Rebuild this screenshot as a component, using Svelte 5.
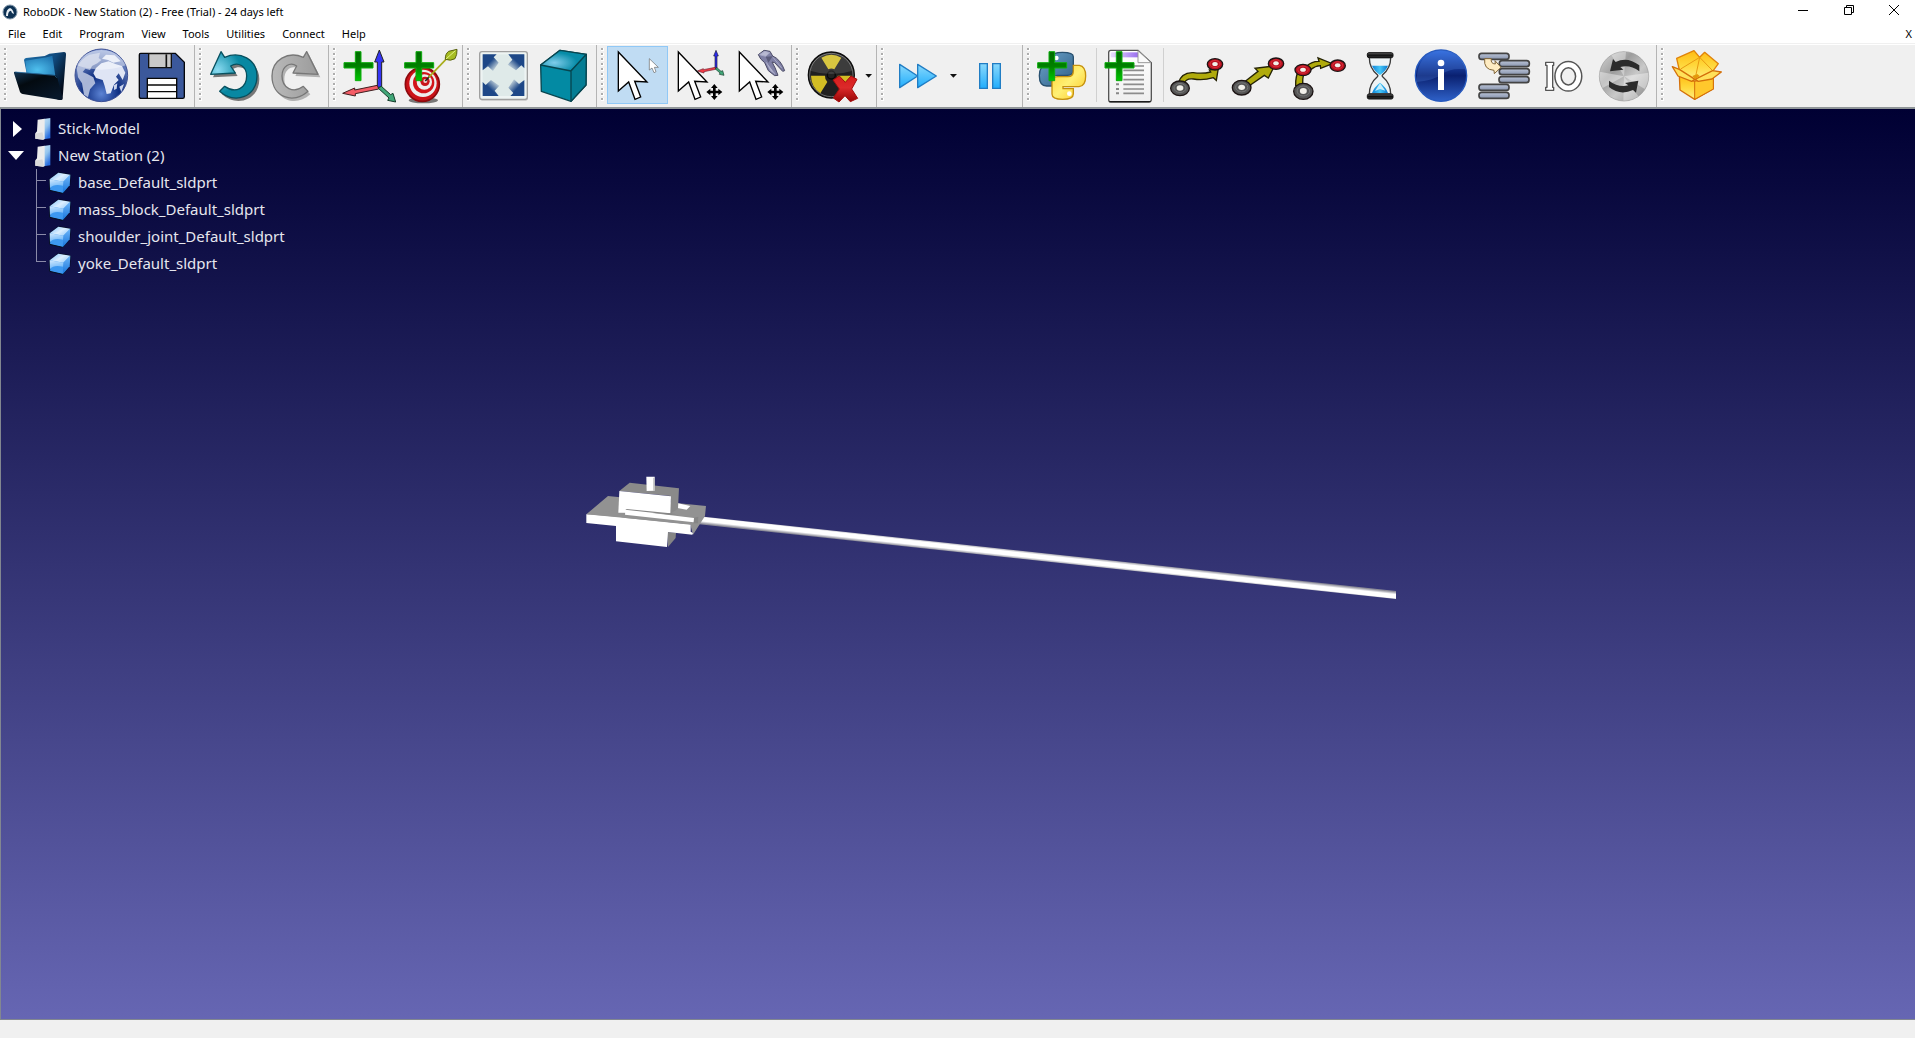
<script>
  const menus = ['File', 'Edit', 'Program', 'View', 'Tools', 'Utilities', 'Connect', 'Help'];

  // x and y are the origin of each icon's own drawing space
  const groups = [
    [
      { icon: 'open', label: 'Open', x: 30, y: 138 },
      { icon: 'globe', label: 'Open online library', x: 213, y: 138 },
      { icon: 'save', label: 'Save Station', x: 396, y: 138 }
    ],
    [
      { icon: 'undo', label: 'Undo', x: 45 },
      { icon: 'redo', label: 'Redo', x: 228 }
    ],
    [
      { icon: 'frame', label: 'Add reference frame', x: 447 },
      { icon: 'target', label: 'Add target', x: 630 }
    ],
    [
      { icon: 'fit', label: 'Fit all', x: 39 },
      { icon: 'cube', label: 'Isometric view', x: 222 }
    ],
    [
      { icon: 'select', label: 'Select', x: 441, pressed: true },
      { icon: 'moveFrame', label: 'Move reference frame', x: 624 },
      { icon: 'moveTool', label: 'Move tool', x: 807 }
    ],
    [{ icon: 'collision', label: 'Check collisions', x: 36, menu: true }],
    [
      { icon: 'fast', label: 'Fast simulation', x: 291, menu: true },
      { icon: 'pause', label: 'Pause simulation', x: 510 }
    ],
    [
      { icon: 'python', label: 'Add Python program', x: 729 },
      { icon: 'program', label: 'Add program', x: 930, split: true },
      { icon: 'moveJ', label: 'Move joint', x: 51, split: true },
      { icon: 'moveL', label: 'Move linear', x: 234 },
      { icon: 'moveC', label: 'Move circular', x: 417 },
      { icon: 'wait', label: 'Pause instruction', x: 600 },
      { icon: 'info', label: 'Show message', x: 783 },
      { icon: 'call', label: 'Program call', x: 96 },
      { icon: 'io', label: 'Set or wait I/O', x: 279 },
      { icon: 'sync', label: 'Update program', x: 462 }
    ],
    [{ icon: 'box', label: 'Export package', x: 681 }]
  ];

  const parts = [
    'base_Default_sldprt',
    'mass_block_Default_sldprt',
    'shoulder_joint_Default_sldprt',
    'yoke_Default_sldprt'
  ];
</script>

{#snippet plus(x, y)}
  <path transform="translate({x} {y})" d="M34 0h17v33h36v16H51v38H34V49H0V33h34z" fill="url(#green)" stroke="#0cae0c" stroke-width="3" />
{/snippet}

{#snippet pointer(x)}
  <path transform="translate({x} 36)" d="M0 0V117L31 90L50 142L67 135L49 88L86 90Z" fill="#fff" stroke="#000" stroke-width="4" />
{/snippet}

{#snippet fourWay(x, y)}
  <path transform="translate({x} {y})" d="M0-24l10 12H4V-4H12V-10L24 0L12 10V4H4V12H10L0 24L-10 12H-4V4H-12V10L-24 0L-12-10V-4H-4V-12H-10Z" fill="#000" />
{/snippet}

{#snippet node(x, y, rx, ry, red)}
  <ellipse cx={x} cy={y} {rx} {ry} fill={red ? '#b9101f' : '#555'} stroke="#1c1414" stroke-width="4" />
  <ellipse cx={x} cy={y - 1} rx={rx * 0.65} ry={ry * 0.62} fill="none" stroke={red ? '#d8323c' : '#777'} stroke-width="3" />
  <ellipse cx={x} cy={y - 1} rx={rx * 0.36} ry={ry * 0.36} fill="#f2f0ea" />
{/snippet}

{#snippet pill(x, y)}
  <rect {x} {y} width="90" height="18" rx="8" fill="url(#pill)" stroke="#444" stroke-width="5" />
{/snippet}

{#snippet art(name)}
  {#if name === 'open'}
    <path d="M72 180Q73 175 78 174L134 168L148 161L192 156Q199 156 198 165L188 294Q187 301 178 300L90 270Z" fill="url(#folderBack)" />
    <path d="M76 182L140 172L157 167L166 228L80 222Z" fill="url(#folderGlow)" />
    <path d="M44 215L164 225Q170 226 172 233L188 297Q187 301 181 300L68 282Q62 281 60 276L42 220Q41 215 44 215Z" fill="url(#folderFront)" />
    <path d="M46 216L164 226L170 233" fill="none" stroke="#2c78b4" stroke-width="2" />
  {:else if name === 'globe'}
    <circle cx="304" cy="226" r="79" fill="url(#sea)" stroke="#3c4f94" stroke-width="3" />
    <path d="M230 204Q240 178 268 164L300 158L296 174L304 180L292 190L276 198L270 210L256 206L248 216L262 222L280 232L286 250L270 268L264 292L252 284L246 250L234 232Z" fill="#b9c4e0" opacity=".9" />
    <path d="M304 190L326 184L346 192L366 198L376 218L368 240L356 220L348 230L356 240L342 254L332 280L320 282L314 258L308 240L288 234L280 220L288 204Z" fill="#dfe5f5" />
    <path d="M306 176L318 164L344 166L362 184L340 188L324 180Z" fill="#dfe5f5" />
    <path d="M342 256L352 250L350 266L342 270ZM358 260L372 252L364 276Z" fill="#ccd5ec" />
    <path d="M231 196Q250 153 304 150Q358 153 377 196Q304 222 231 196Z" fill="#fff" opacity=".42" />
  {:else if name === 'save'}
    <path d="M422 160H526L553 187V290Q553 295 548 295H424Q418 295 418 290V164Q418 160 422 160Z" fill="#3b589b" stroke="#05070c" stroke-width="4" />
    <path d="M446 161H514V203H446Z" fill="#c9c9c9" stroke="#111" stroke-width="4" />
    <path d="M499 163V201" stroke="#111" stroke-width="5" />
    <path d="M442 235H530V295H442Z" fill="#fff" stroke="#080808" stroke-width="4" />
    <path d="M442 255H530M442 275H530" stroke="#080808" stroke-width="4" />
  {:else if name === 'undo'}
    <path transform="translate(7 9)" d="M62 103L93 35L104 52C150 32 201 58 201 108C201 172 132 194 89 154L104 139C137 162 170 144 170 108C170 78 144 64 122 78L136 99Z" fill="#777" />
    <path d="M62 103L93 35L104 52C150 32 201 58 201 108C201 172 132 194 89 154L104 139C137 162 170 144 170 108C170 78 144 64 122 78L136 99Z" fill="url(#teal)" stroke="#07505f" stroke-width="4" stroke-linejoin="round" />
  {:else if name === 'redo'}
    <path transform="translate(7 9)" d="M384 103L350 35L340 52C294 32 246 60 246 108C246 172 311 194 354 154L340 139C310 162 276 144 276 108C276 78 301 64 320 78L309 99Z" fill="#b2b2b2" />
    <path d="M384 103L350 35L340 52C294 32 246 60 246 108C246 172 311 194 354 154L340 139C310 162 276 144 276 108C276 78 301 64 320 78L309 99Z" fill="url(#grey)" stroke="#777" stroke-width="4" stroke-linejoin="round" />
  {:else if name === 'frame'}
    <path d="M562 142V66H554L568 30L582 66H575V142Z" fill="#3535f4" stroke="#222" stroke-width="3" />
    <path d="M562 136L494 150V144L458 160L496 168V161L566 147Z" fill="#f45c66" stroke="#402020" stroke-width="3" />
    <path d="M564 144L574 139L602 164L609 160L617 186L593 181L597 174Z" fill="#41a778" stroke="#143c2a" stroke-width="3" />
    {@render plus(462, 35)}
  {:else if name === 'target'}
    <ellipse cx="700" cy="181" rx="44" ry="9" fill="#777" />
    <circle cx="697" cy="133" r="51" fill="#cb1218" stroke="#8d0a0e" stroke-width="5" />
    <circle cx="699" cy="130" r="41" fill="#eee" />
    <circle cx="701" cy="128" r="32" fill="#d3151a" />
    <circle cx="703" cy="126" r="23" fill="#eee" />
    <circle cx="705" cy="124" r="14" fill="#c9141a" />
    <circle cx="706" cy="123" r="6" fill="#f0d0d0" />
    {@render plus(644, 35)}
    <path d="M706 123L722 105" stroke="#222" stroke-width="5" />
    <path d="M716 112L770 56" stroke="#a8ad1d" stroke-width="5" />
    <path d="M766 58Q765 42 776 34L801 28Q802 44 795 56Q782 64 766 58Z" fill="#a6bd21" stroke="#59600e" stroke-width="3" />
    <path d="M768 57L796 32" stroke="#e5f08c" stroke-width="3" />
  {:else if name === 'fit'}
    <rect x="60" y="36" width="144" height="146" rx="8" fill="#999" opacity=".5" />
    <rect x="59" y="35" width="143" height="143" rx="7" fill="#eef4f3" stroke="#a0a0a0" stroke-width="4" />
    <rect x="68" y="43" width="125" height="125" fill="#dfeae9" />
    {#each [0, 90, 180, 270] as turn}
      <g transform="rotate({turn} 130.500 105.500)">
        <path d="M68 43H110L101 52L116 68L99 93L84 79L68 91Z" fill="url(#corner)" />
      </g>
    {/each}
  {:else if name === 'cube'}
    <path d="M242 75L300 31L379 43L378 135L333 184L244 154Z" fill="#038aa3" stroke="#07454f" stroke-width="4" stroke-linejoin="round" />
    <path d="M242 75L300 31L379 43L333 93Z" fill="url(#cubeTop)" stroke="#07454f" stroke-width="4" stroke-linejoin="round" />
    <path d="M333 93L379 43L378 135L333 184Z" fill="#047d94" stroke="#07454f" stroke-width="4" stroke-linejoin="round" />
  {:else if name === 'select'}
    {@render pointer(475)}
    <path d="M568 56V90L576 84L582 98L588 95L583 82H595Z" fill="#fff" stroke="#666" stroke-width="2" />
  {:else if name === 'moveFrame'}
    <path d="M765 84V48H761L768 31L775 48H771V84Z" fill="#2929f0" stroke="#223" stroke-width="2" />
    <path d="M766 82L730 89V86L712 93L732 99V95L767 88Z" fill="#f03b45" stroke="#723" stroke-width="2" />
    <path d="M765 86L771 83L783 94L788 92L792 106L778 103L780 99Z" fill="#41a778" stroke="#143c2a" stroke-width="2" />
    {@render pointer(655)}
    {@render fourWay(763, 156)}
  {:else if name === 'moveTool'}
    <path d="M895 44L912 31L930 34L938 48Q962 58 974 92L968 94L944 68L936 66Q946 82 954 106L944 107L925 92L914 68Q900 58 895 44Z" fill="#7f80a5" stroke="#4b4b66" stroke-width="3" />
    <path d="M899 44L914 34L929 38L917 49ZM919 67L932 92L945 101M939 52L965 84" fill="#b8b9d2" stroke="#a9abc8" stroke-width="3" />
    <path d="M917 50L938 49L925 68Z" fill="#5b5c7c" />
    {@render pointer(838)}
    {@render fourWay(946, 156)}
  {:else if name === 'collision'}
    <circle cx="124" cy="105" r="69" fill="#202020" stroke="#0c0c0c" stroke-width="4" />
    <circle cx="124" cy="105" r="65" fill="none" stroke="#696969" stroke-width="3" />
    <path d="M115 88L94 53Q124 36 154 53L133 88Q124 83 115 88ZM105 107H63Q63 140 91 160L112 126Q104 118 105 107ZM143 107H185Q185 140 157 160L136 126Q144 118 143 107Z" fill="#d2bd24" />
    <circle cx="124" cy="105" r="12" fill="#222" stroke="#090909" stroke-width="4" />
    <path d="M60 92Q70 42 124 39Q178 42 188 92Q124 112 60 92Z" fill="#fff" opacity=".13" />
    <path d="M129 120L148 108L166 127L183 108L201 118L185 147L203 175L181 185L165 167L147 186L130 174L148 147Z" fill="url(#cross)" stroke="#a30e0e" stroke-width="3" stroke-linejoin="round" />
    <path d="M226 102H246L236 113Z" fill="#111" />
  {:else if name === 'fast'}
    <path d="M329 73L383 108L329 143ZM383 73L439 108L383 143Z" fill="url(#play)" stroke="#207dc4" stroke-width="4" stroke-linejoin="round" />
    <path d="M480 102H501L490 113Z" fill="#111" />
  {:else if name === 'pause'}
    <path d="M569 71H592V145H569ZM608 71H631V145H608Z" fill="url(#play)" stroke="#207dc4" stroke-width="4" />
  {:else if name === 'python'}
    <path d="M787 62V50Q787 37 817 37Q850 37 850 50V89Q850 106 832 106H802Q786 106 786 122V138H770Q748 138 748 107Q748 77 770 77H818V72H787Z" fill="url(#pyBlue)" stroke="#28506f" stroke-width="4" />
    <path d="M850 76H868Q887 79 887 108Q887 138 867 140H819V146H850V162Q850 178 818 178Q786 178 786 162V127Q786 110 803 110H834Q850 110 850 93Z" fill="url(#pyYellow)" stroke="#c6910e" stroke-width="4" />
    <circle cx="799" cy="54" r="7" fill="#fff" />
    <circle cx="838" cy="161" r="7" fill="#fff" />
    {@render plus(743, 35)}
  {:else if name === 'program'}
    <path d="M962 31H1044L1084 68V178Q1084 186 1077 186H963Q956 186 956 179V38Q956 31 962 31Z" fill="url(#paper)" stroke="#555" stroke-width="4" />
    <path d="M958 185H1082" stroke="#1c1c1c" stroke-width="4" />
    <path d="M962 37H1044V52H962Z" fill="url(#violet)" />
    <path d="M1044 32V68H1083Z" fill="#fafafa" stroke="#999" stroke-width="3" />
    <path d="M1000 78H1062M1000 91H1062M1000 105H1062M1000 119H1062M1000 133H1062M1000 147H1062M1000 160H1062" stroke="#8c8c8c" stroke-width="5" />
    <path d="M978 119H987M978 133H987M978 147H987M978 160H987" stroke="#888" stroke-width="6" />
    {@render plus(945, 35)}
  {:else if name === 'moveJ'}
    <path d="M84 131Q94 96 130 98Q158 102 182 96L178 90L205 84L199 121L190 113Q160 122 130 117Q107 114 101 133Z" fill="#b0ab0c" stroke="#252305" stroke-width="4" />
    {@render node(90, 145, 28, 22, false)}
    {@render node(195, 73, 23, 17, true)}
  {:else if name === 'moveL'}
    <path d="M283 126L324 94L315 85L373 78L355 114L343 106L300 136Z" fill="#b0ab0c" stroke="#252305" stroke-width="4" />
    {@render node(275, 143, 28, 22, false)}
    {@render node(378, 71, 23, 17, true)}
  {:else if name === 'moveC'}
    <path d="M437 136Q436 110 446 92L463 98Q456 114 459 140ZM470 78Q487 63 507 64L504 54L547 71L512 85L511 77Q495 78 484 88Z" fill="#b0ab0c" stroke="#252305" stroke-width="4" />
    {@render node(460, 154, 29, 24, false)}
    {@render node(459, 90, 24, 17, true)}
    {@render node(563, 77, 23, 17, true)}
  {:else if name === 'wait'}
    <path d="M658 53H722Q722 84 698 104Q695 107 698 110Q722 130 722 162H658Q658 130 682 110Q685 107 682 104Q658 84 658 53Z" fill="#edf3f5" stroke="#3a3a3a" stroke-width="4" />
    <path d="M666 77H714Q708 92 690 105Q672 92 666 77ZM690 128Q708 142 714 159H666Q672 142 690 128Z" fill="url(#water)" />
    <path d="M690 130L706 152L690 147L675 153Z" fill="#c8eefb" />
    <rect x="652" y="38" width="77" height="15" rx="5" fill="url(#cap)" stroke="#111" stroke-width="3" />
    <rect x="652" y="162" width="77" height="15" rx="5" fill="url(#cap)" stroke="#111" stroke-width="3" />
  {:else if name === 'info'}
    <circle cx="873" cy="107" r="77" fill="url(#infoBlue)" stroke="#2659be" stroke-width="4" />
    <path d="M799 126Q850 121 873 105Q900 83 946 88Q937 34 873 31Q802 35 799 126Z" fill="#568ce9" opacity=".25" />
    <circle cx="873" cy="69" r="10" fill="#fff" />
    <path d="M864 87H882V150H864Z" fill="#fff" />
  {:else if name === 'call'}
    {@render pill(117, 40)}
    {@render pill(178, 62)}
    {@render pill(178, 86)}
    {@render pill(177, 110)}
    {@render pill(117, 133)}
    {@render pill(117, 157)}
    <path d="M134 56H154Q151 71 166 72L165 62L183 82L163 101L162 91Q130 89 134 56Z" fill="#ffecc2" stroke="#806438" stroke-width="3" />
  {:else if name === 'io'}
    <path d="M317 67H341V76H338V142H341V151H317V142H321V76H317Z" fill="#fff" stroke="#555" stroke-width="4" stroke-linejoin="round" />
    <ellipse cx="385" cy="109" rx="31" ry="35" fill="none" stroke="#555" stroke-width="23" />
    <ellipse cx="385" cy="109" rx="31" ry="35" fill="none" stroke="#fff" stroke-width="14" />
  {:else if name === 'sync'}
    <circle cx="552" cy="109" r="74" fill="url(#steel)" stroke="#999" stroke-width="2" />
    <path d="M552 109L514 45Q535 34 558 35ZM552 109L595 169Q572 183 550 182Z" fill="#fff" opacity=".35" />
    <path d="M552 109L479 95Q476 122 488 144ZM552 109L625 98Q628 123 614 147Z" fill="#fff" opacity=".4" />
    <path d="M510 94L519 57L527 66Q562 48 598 76V94Q570 73 541 81L550 89ZM595 122L588 158L579 150Q540 168 507 141V122Q536 144 565 136L555 129Z" fill="#2b2b2b" />
  {:else if name === 'box'}
    <path d="M718 106L764 124L820 111V147L764 178L720 150Z" fill="url(#boxFace)" stroke="#d4700a" stroke-width="4" stroke-linejoin="round" />
    <path d="M764 124L820 111V147L764 178Z" fill="#ffc82c" stroke="#d4700a" stroke-width="3" />
    <path d="M710 55L762 32L779 52L794 37L835 71L818 94L765 120L718 90Z" fill="url(#boxFace)" stroke="#e08309" stroke-width="4" stroke-linejoin="round" />
    <path d="M779 52L816 90M722 87L779 52L765 118" fill="none" stroke="#e89a11" stroke-width="3" />
    <path d="M697 80L718 88L765 118L755 124L714 108ZM765 118L818 92L844 96L816 117L775 124Z" fill="#ffe05a" stroke="#d4700a" stroke-width="4" stroke-linejoin="round" />
    <path d="M757 108L772 102L779 108L765 118Z" fill="#e49a0b" />
  {/if}
{/snippet}

{#snippet stationIcon()}
  <svg class="station" viewBox="0 0 48 66" aria-hidden="true">
    <path d="M26 3L46 0V61L26 64Z" fill="url(#stationSide)" />
    <path d="M8 5L29 2V63L25 65L1 62V46L6 40Z" fill="#ececec" />
    <path d="M1 47L22 43L26 58L25 65L1 62Z" fill="#dadada" />
  </svg>
{/snippet}

<svg class="defs" aria-hidden="true">
  <defs>
    <linearGradient id="green" x2="0" y2="1"><stop stop-color="#006a00" /><stop offset=".5" stop-color="#008000" /><stop offset="1" stop-color="#00c800" /></linearGradient>
    <linearGradient id="folderBack" x2="1" y2=".6"><stop stop-color="#1c6ea8" /><stop offset=".6" stop-color="#10497c" /><stop offset="1" stop-color="#020b1a" /></linearGradient>
    <radialGradient id="folderGlow" cx=".4" cy=".7" r=".8"><stop stop-color="#4fc0ee" /><stop offset="1" stop-color="#1d70ad" /></radialGradient>
    <linearGradient id="folderFront" x2=".7" y2="1"><stop stop-color="#123554" /><stop offset=".4" stop-color="#030a10" /><stop offset="1" stop-color="#07172a" /></linearGradient>
    <radialGradient id="sea" cx=".5" cy=".85" r=".85"><stop stop-color="#5c83d4" /><stop offset=".4" stop-color="#0d2d80" /><stop offset="1" stop-color="#8ea4d8" /></radialGradient>
    <radialGradient id="teal" cx=".15" cy=".4" r=".5"><stop stop-color="#8bdcf2" /><stop offset="1" stop-color="#0888a2" /></radialGradient>
    <linearGradient id="grey" x2="1"><stop stop-color="#b9b9b9" /><stop offset="1" stop-color="#9b9b9b" /></linearGradient>
    <linearGradient id="corner" x2=".9" y2=".9"><stop offset=".5" stop-color="#1d4787" /><stop offset="1" stop-color="#1d4787" stop-opacity="0" /></linearGradient>
    <radialGradient id="cubeTop" cx=".3" cy=".6" r=".5"><stop stop-color="#80cdeb" /><stop offset="1" stop-color="#078ca8" /></radialGradient>
    <linearGradient id="cross" x2="0" y2="1"><stop stop-color="#d61c1c" /><stop offset=".45" stop-color="#dc2a2a" /><stop offset="1" stop-color="#960606" /></linearGradient>
    <linearGradient id="play" x2="0" y2="1"><stop stop-color="#8ad9fc" /><stop offset="1" stop-color="#20adfc" /></linearGradient>
    <linearGradient id="pyBlue" x2="1" y2="1"><stop stop-color="#6ea5cd" /><stop offset="1" stop-color="#2d5d84" /></linearGradient>
    <linearGradient id="pyYellow" x2="1" y2="1"><stop stop-color="#ffd331" /><stop offset=".5" stop-color="#fff075" /><stop offset="1" stop-color="#fbc51f" /></linearGradient>
    <linearGradient id="paper" x2="0" y2="1"><stop stop-color="#fff" /><stop offset="1" stop-color="#efefef" /></linearGradient>
    <linearGradient id="violet"><stop stop-color="#e9defc" /><stop offset="1" stop-color="#9b6ff0" /></linearGradient>
    <linearGradient id="water"><stop stop-color="#0d83d8" /><stop offset=".5" stop-color="#45c7f7" /><stop offset="1" stop-color="#0877cf" /></linearGradient>
    <linearGradient id="cap" x2="0" y2="1"><stop stop-color="#666" /><stop offset=".5" stop-color="#111" /><stop offset="1" stop-color="#333" /></linearGradient>
    <linearGradient id="infoBlue" x2="0" y2="1"><stop stop-color="#2f6be0" /><stop offset=".5" stop-color="#0a2070" /><stop offset="1" stop-color="#2f62c9" /></linearGradient>
    <linearGradient id="pill" x2="0" y2="1"><stop stop-color="#bcc5d8" /><stop offset="1" stop-color="#8793ac" /></linearGradient>
    <linearGradient id="steel" x2="1" y2="1"><stop stop-color="#d8d8d8" /><stop offset=".35" stop-color="#9d9d9d" /><stop offset=".6" stop-color="#c9c9c9" /><stop offset="1" stop-color="#858585" /></linearGradient>
    <linearGradient id="boxFace" x2="0" y2="1"><stop stop-color="#ffbc14" /><stop offset=".5" stop-color="#ffd83c" /><stop offset="1" stop-color="#ffee80" /></linearGradient>
    <linearGradient id="partTop" x2="1" y2=".6"><stop stop-color="#7fbef8" /><stop offset=".6" stop-color="#dcefff" /><stop offset="1" stop-color="#a4d2fb" /></linearGradient>
    <linearGradient id="partFront" x2=".3" y2="1"><stop stop-color="#d2e9fe" /><stop offset="1" stop-color="#6db6f8" /></linearGradient>
    <linearGradient id="partSide" x2="0" y2="1"><stop stop-color="#6fb6f8" /><stop offset="1" stop-color="#1674dc" /></linearGradient>
    <linearGradient id="stationSide" x2=".4" y2="1"><stop stop-color="#c4e2f8" /><stop offset=".5" stop-color="#93c4ee" /><stop offset="1" stop-color="#2a6fe0" /></linearGradient>
    <linearGradient id="rod" gradientUnits="userSpaceOnUse" x1="1047" y1="553" x2="1046" y2="562"><stop stop-color="#8c8c98" /><stop offset=".3" stop-color="#fff" /><stop offset=".7" stop-color="#fff" /><stop offset="1" stop-color="#8c8c98" /></linearGradient>
  </defs>
</svg>

<div class="app">
  <header class="title">
    <svg class="logo" viewBox="0 0 16 16" aria-hidden="true">
      <circle cx="8" cy="8" r="7" fill="#0d3153" stroke="#8297aa" stroke-width="1" />
      <path d="M4 12Q4 5 8 4Q11 5 12 10L10 9Q9 6 8 7Q6 8 6 12Z" fill="#e7eef4" />
    </svg>
    <h1>RoboDK - New Station (2) - Free (Trial) - 24 days left</h1>
    <div class="window-buttons">
      <button aria-label="Minimize"><svg viewBox="0 0 10 10"><path d="M0 5.500H10" /></svg></button>
      <button aria-label="Restore"><svg viewBox="0 0 10 10"><path d="M.5 2.500H7.500V9.500H.5ZM2.500 2.500V.5H9.500V7.500H7.500" /></svg></button>
      <button aria-label="Close"><svg viewBox="0 0 10 10"><path d="M0 0L10 10M10 0L0 10" /></svg></button>
    </div>
  </header>

  <nav class="menubar" aria-label="Main menu">
    {#each menus as menu}<button>{menu}</button>{/each}
    <button class="close-doc" aria-label="Close station">X</button>
  </nav>

  <div class="toolbar" role="toolbar" aria-label="Tools">
    {#each groups as group, g}
      <div class="group" class:last={g === groups.length - 1}>
        <svg class="grip" viewBox="0 0 4 54" aria-hidden="true">
          <path d="M1.500 0V54" stroke="#fff" stroke-width="3" stroke-dasharray="3 2" />
          <path d="M1 0V54" stroke="#adadad" stroke-width="2" stroke-dasharray="2 3" />
        </svg>
        {#each group as tool}
          {#if tool.split}<span class="split"></span>{/if}
          <button class="tool" class:wide={tool.menu} class:pressed={tool.pressed} aria-label={tool.label} title={tool.label}>
            <svg viewBox="{tool.x} {tool.y ?? 18} {tool.menu ? 216 : 180} 174">{@render art(tool.icon)}</svg>
          </button>
        {/each}
      </div>
    {/each}
  </div>

  <main>
    <svg class="scene" viewBox="1 109 1914 910" preserveAspectRatio="xMidYMid slice" role="img" aria-label="3D view">
      <path d="M697 516L1396 591V599L697 524Z" fill="url(#rod)" />
      <g transform="translate(570 460) scale(.3333)">
        <path d="M49 163L114 108L408 138L405 168L369 224L360 190L140 180Z" fill="#929292" />
        <path d="M291 216L318 218L317 234L294 261Z" fill="#858585" />
        <path d="M324 134L324 130L361 138L350 149L322 144Z" fill="#fff" />
        <path d="M49 163L362 193V215L369 219L367 224L294 216L291 261L138 244V198L49 189Z" fill="#fff" />
        <path d="M50 163L165 148L373 173L371 191L362 194L168 174L150 171Z" fill="#929292" />
        <path d="M148 93L179 68L327 85L324 146L301 161L302 108Z" fill="#8a8a8a" />
        <path d="M148 93L303 109L301 160L145 158Z" fill="#fff" />
        <path d="M166 149L372 174L371 187L165 164Z" fill="#fff" />
        <path d="M166 149L302 164L320 163L301 160L170 147Z" fill="#858585" />
        <path d="M229 50H254V92L230 93Z" fill="#fff" />
        <path d="M250 53H254V92H250Z" fill="#b4b4b4" />
        <path d="M373 173L385 170L384 190L371 190Z" fill="#858585" />
      </g>
    </svg>

    <ul class="tree">
      <li>
        <div class="row">
          <svg class="arrow" viewBox="0 0 16 16"><path d="M5 0L14 8L5 16Z" /></svg>
          {@render stationIcon()}
          <span>Stick-Model</span>
        </div>
      </li>
      <li>
        <div class="row">
          <svg class="arrow" viewBox="0 0 16 16"><path d="M0 3H16L8 12Z" /></svg>
          {@render stationIcon()}
          <span>New Station (2)</span>
        </div>
        <ul class="children">
          {#each parts as part}
            <li class="row">
              <svg class="branch" viewBox="0 0 10 27" aria-hidden="true">
                <path d="M.5 0V{part === parts.at(-1) ? 11.500 : 27}M0 11.500H10" />
              </svg>
              <svg class="part" viewBox="0 0 66 66" aria-hidden="true">
                <path d="M2 22L28 2L64 8L62 40L41 64L2 55Z" fill="#3d98f0" stroke="#050d1c" stroke-width="3" stroke-linejoin="round" />
                <path d="M2 22L28 2L64 8L43 29Z" fill="url(#partTop)" />
                <path d="M43 29L64 8L62 40L41 64Z" fill="url(#partSide)" />
                <path d="M2 22L43 29L42 41Q14 34 3 48Z" fill="url(#partFront)" />
              </svg>
              <span>{part}</span>
            </li>
          {/each}
        </ul>
      </li>
    </ul>
  </main>

  <footer></footer>
</div>

<style>
  :global(body) {
    margin: 0;
  }
  .defs {
    position: absolute;
    width: 0;
    height: 0;
  }
  .app {
    display: flex;
    flex-direction: column;
    min-height: 100vh;
    background: #f0f0f0;
    font-family: 'Noto Sans', 'Open Sans', sans-serif;
    font-size: 11px;
    color: #000;
  }
  button {
    border: 0;
    padding: 0;
    background: none;
    font: inherit;
    color: inherit;
  }
  svg {
    display: block;
    flex: none;
  }
  .title {
    display: flex;
    align-items: center;
    height: 23px;
    padding-left: 2px;
    background: #fff;
  }
  .logo {
    width: 16px;
    height: 16px;
  }
  h1 {
    flex: 1;
    margin: 0;
    padding-left: 5px;
    font-size: 11px;
    font-weight: 400;
    line-height: 20px;
  }
  .window-buttons {
    display: flex;
    align-self: stretch;
    padding-right: 3px;
  }
  .window-buttons button {
    display: flex;
    align-items: center;
    justify-content: center;
    width: 46px;
    padding-bottom: 3px;
  }
  .window-buttons button:last-child {
    width: 40px;
    padding-left: 3px;
  }
  .window-buttons svg {
    width: 10px;
    height: 10px;
    overflow: visible;
  }
  .window-buttons path {
    fill: none;
    stroke: #000;
  }
  .menubar {
    display: flex;
    gap: 1px;
    height: 20px;
    background: #fff;
    border-bottom: 1px solid #f0f0f0;
  }
  .menubar button {
    height: 20px;
    padding: 1px 8px 0;
    line-height: 19px;
  }
  .menubar .close-doc {
    margin-left: auto;
    padding: 1px 3px 0;
  }
  .toolbar {
    display: flex;
    height: 63px;
    background: #fff;
  }
  .group {
    display: flex;
    align-items: flex-start;
    box-sizing: border-box;
    padding: 1px 1px 0 0;
    margin-top: 1px;
    background: #f0f0f0;
    border-right: 1px solid #b4b4b4;
  }
  .group.last {
    flex: 1;
    border-right: 0;
  }
  .grip {
    width: 4px;
    height: 54px;
    margin: 2px 2px 0 4px;
  }
  .tool {
    width: 61px;
    height: 58px;
  }
  .tool.wide {
    width: 73px;
  }
  .tool svg {
    width: 60px;
    height: 58px;
  }
  .tool.wide svg {
    width: 72px;
  }
  .tool.pressed {
    background: #c0dcf3;
    outline: 1px solid #90c8f6;
    outline-offset: -1px;
  }
  .split {
    width: 1px;
    height: 54px;
    margin: 2px 3px 0 2px;
    background: #d0d0d0;
  }
  main {
    position: relative;
    flex: 1;
    border: solid #828790;
    border-width: 2px 0 1px 1px;
    border-top-color: #8f9598;
    background: linear-gradient(#000033, #6666b3);
    overflow: hidden;
  }
  .scene {
    position: absolute;
    inset: 0;
    width: 100%;
    height: 100%;
  }
  .tree,
  .children {
    list-style: none;
    margin: 0;
    padding: 0;
  }
  .tree {
    position: relative;
    padding: 6px 0 0 7px;
    font-size: 15px;
    color: #e6e6ee;
  }
  .row {
    display: flex;
    align-items: center;
    height: 27px;
    line-height: 27px;
  }
  .arrow {
    width: 16px;
    height: 16px;
    margin-right: 11px;
    fill: #fff;
  }
  .station {
    width: 16px;
    height: 22px;
    margin-right: 7px;
  }
  .children {
    padding-left: 28px;
  }
  .branch {
    width: 10px;
    height: 27px;
    margin-right: 3px;
    fill: none;
    stroke: #8a8aa8;
  }
  .part {
    width: 22px;
    height: 22px;
    margin-right: 7px;
  }
  footer {
    height: 18px;
  }
</style>
